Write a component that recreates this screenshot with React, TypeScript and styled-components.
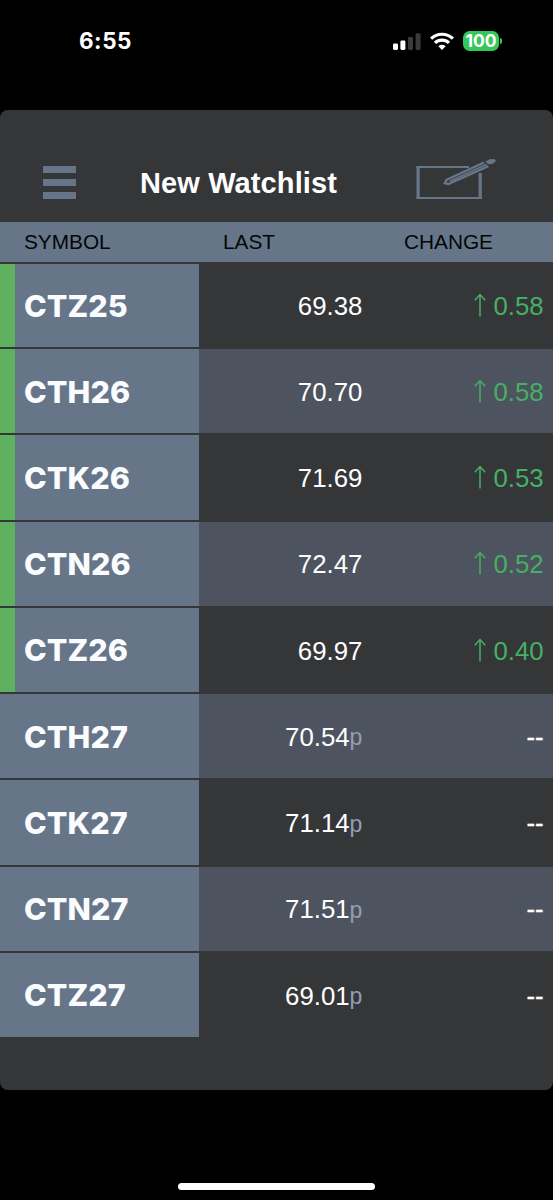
import React from 'react';
import styled, { createGlobalStyle } from 'styled-components';

const steel = '#667688';
const charcoal = '#353638';

const GlobalStyle = createGlobalStyle`
  * { box-sizing: border-box; }
  body { margin: 0; background: #000; font-family: "Liberation Sans", Arial, sans-serif; }
`;

const Screen = styled.div`
  width: 553px;
  height: 1200px;
  background: #000;
  display: flex;
  flex-direction: column;
  overflow: hidden;
`;

const StatusBar = styled.header`
  height: 110px;
  flex: none;
  display: flex;
  justify-content: space-between;
  align-items: flex-start;
  padding: 27px 51px 0 79px;
`;

const Clock = styled.span`
  font: 700 22.5px/28px Inter, sans-serif;
  letter-spacing: 0.5px;
  color: #fff;
`;

const Indicators = styled.div`
  display: flex;
  align-items: center;
  height: 28px;
`;

const SignalIcon = styled.svg`
  display: block;
  margin-right: 9px;
`;

const WifiIcon = styled.svg`
  display: block;
  margin-right: 9px;
`;

const Battery = styled.div`
  width: 36px;
  height: 20px;
  border-radius: 6.5px;
  background: #34c759;
  color: #fff;
  text-align: center;
  font: 700 17.5px/20px Inter, sans-serif;
  letter-spacing: -0.1px;
`;

const BatteryTip = styled.div`
  width: 2px;
  height: 6px;
  margin-left: 1px;
  border-radius: 0 2px 2px 0;
  background: #34c759;
`;

const Panel = styled.main`
  height: 980px;
  flex: none;
  border-radius: 8px;
  background: ${charcoal};
  overflow: hidden;
`;

const Toolbar = styled.div`
  height: 112px;
  display: flex;
  align-items: flex-start;
  padding: 48px 56px 0 43px;
`;

const MenuButton = styled.button`
  width: 33px;
  height: 33px;
  margin: 8px 64px 0 0;
  padding: 0;
  border: 0;
  background: none;
  display: flex;
  flex-direction: column;
  justify-content: space-between;
`;

const MenuBar = styled.span`
  width: 33px;
  height: 7px;
  background: ${steel};
`;

const Title = styled.h1`
  margin: 8px auto 0 0;
  font-size: 29px;
  line-height: 34px;
  font-weight: 700;
  letter-spacing: 0.12px;
  color: #fff;
  white-space: nowrap;
`;

const EditButton = styled.button`
  padding: 0;
  border: 0;
  background: none;
  svg { display: block; }
`;

const ColumnHeader = styled.div`
  height: 40px;
  display: grid;
  grid-template-columns: 223px 181px 1fr;
  background: ${steel};
  color: #020609;
  font-size: 20.8px;
  line-height: 40px;
`;

const HeaderLabel = styled.span<{ $inset?: boolean }>`
  padding-left: ${p => (p.$inset ? '24px' : '0')};
`;

const Rows = styled.div`
  padding-top: 2px;
  display: flex;
  flex-direction: column;
  gap: 2px;
`;

const Row = styled.div<{ $shaded: boolean; $first: boolean }>`
  height: ${p => (p.$first ? 83 : 84.28)}px;
  flex: none;
  display: grid;
  grid-template-columns: 198.6px 163.8px 1fr;
  grid-template-rows: 100%;
  background: ${p => (p.$shaded ? '#4d545f' : charcoal)};
  line-height: 30px;
  color: #fff;
`;

const Cell = styled.div`
  display: flex;
  align-items: center;
`;

const SymbolCell = styled(Cell)<{ $up: boolean }>`
  border-left: 15px solid ${p => (p.$up ? '#60b15f' : steel)};
  padding: 1px 0 0 9px;
  background: ${steel};
  font-family: Inter, sans-serif;
  font-size: 30.5px;
  font-weight: 800;
  letter-spacing: 0.1px;
  color: #fafcff;
`;

const LastCell = styled(Cell)`
  justify-content: flex-end;
  font-size: 25.8px;
  padding-top: 1.4px;
`;

const Previous = styled.span`
  color: #929db6;
  font-size: 23px;
  padding-top: 1px;
`;

const ChangeCell = styled(Cell)<{ $up: boolean }>`
  justify-content: flex-end;
  padding: 1.4px 9.4px 0 0;
  font-size: 25.8px;
  color: ${p => (p.$up ? '#45b064' : '#fff')};
`;

const NoChange = styled.span`
  -webkit-text-stroke: 0.3px #fff;
`;

const Arrow = styled.svg`
  margin: -2px 7px 0 0;
`;

const HomeArea = styled.footer`
  flex: 1;
  display: flex;
  justify-content: center;
  align-items: flex-end;
  padding-bottom: 10px;
`;

const HomeIndicator = styled.div`
  width: 197px;
  height: 7px;
  border-radius: 4px;
  background: #fff;
`;

const quotes = [
  { symbol: 'CTZ25', last: '69.38', change: '0.58' },
  { symbol: 'CTH26', last: '70.70', change: '0.58' },
  { symbol: 'CTK26', last: '71.69', change: '0.53' },
  { symbol: 'CTN26', last: '72.47', change: '0.52' },
  { symbol: 'CTZ26', last: '69.97', change: '0.40' },
  { symbol: 'CTH27', last: '70.54' },
  { symbol: 'CTK27', last: '71.14' },
  { symbol: 'CTN27', last: '71.51' },
  { symbol: 'CTZ27', last: '69.01' },
];

export default function App() {
  return (
    <Screen>
      <GlobalStyle />
      <StatusBar>
        <Clock>6:55</Clock>
        <Indicators>
          <SignalIcon width="28" height="18" viewBox="0 0 28 18">
            <rect x="0" y="11.5" width="5" height="6.5" rx="1.4" fill="#fff" />
            <rect x="7.4" y="8.5" width="5" height="9.5" rx="1.4" fill="#fff" />
            <rect x="15" y="5" width="5" height="13" rx="1.4" fill="#3a3a3c" />
            <rect x="22.6" y="1.2" width="5" height="16.8" rx="1.4" fill="#3a3a3c" />
          </SignalIcon>
          <WifiIcon width="24" height="18" viewBox="0 0 24 18" fill="none" stroke="#fff" strokeWidth="3.2">
            <path d="M1.1 6.7a15.6 15.6 0 0 1 21.8 0" />
            <path d="M5 10.9a10 10 0 0 1 14 0" />
            <path d="M8.4 14.2a5.2 5.2 0 0 1 7.2 0L12 17.9z" fill="#fff" stroke="none" />
          </WifiIcon>
          <Battery>100</Battery>
          <BatteryTip />
        </Indicators>
      </StatusBar>
      <Panel>
        <Toolbar>
          <MenuButton aria-label="Menu">
            <MenuBar />
            <MenuBar />
            <MenuBar />
          </MenuButton>
          <Title>New Watchlist</Title>
          <EditButton aria-label="Edit">
            <svg width="81" height="42" viewBox="0 0 81 42" fill="none" stroke={steel}>
              <path d="M53 9H0.5" strokeWidth="2" />
              <path d="M2.1 8V41M64.2 15V41" strokeWidth="3.2" />
              <path d="M0.5 40H65.8" strokeWidth="2" />
              <path d="M68 4.5L30.5 21.8L28.8 25.2L32.4 26L72.3 8.2" strokeWidth="2.4" />
              <path d="M34 23.2L70.5 6.2" strokeWidth="1.5" />
              <path d="M69.4 3.4L73.8 1.2L78.4 1L80 3L76.5 6L72.4 6.2Z" fill={steel} stroke="none" />
            </svg>
          </EditButton>
        </Toolbar>
        <ColumnHeader>
          <HeaderLabel $inset>SYMBOL</HeaderLabel>
          <HeaderLabel>LAST</HeaderLabel>
          <HeaderLabel>CHANGE</HeaderLabel>
        </ColumnHeader>
        <Rows>
          {quotes.map((q, i) => (
            <Row key={q.symbol} $shaded={i % 2 === 1} $first={i === 0}>
              <SymbolCell $up={!!q.change}>{q.symbol}</SymbolCell>
              <LastCell>
                {q.last}
                {!q.change && <Previous>p</Previous>}
              </LastCell>
              <ChangeCell $up={!!q.change}>
                {q.change ? (
                  <>
                    <Arrow width="12" height="24" viewBox="0 0 12 24" fill="none" stroke="currentColor" strokeWidth="1.5">
                      <path d="M6 23.5V1.5M0.8 7.2L6 1.5L11.2 7.2" />
                    </Arrow>
                    {q.change}
                  </>
                ) : (
                  <NoChange>--</NoChange>
                )}
              </ChangeCell>
            </Row>
          ))}
        </Rows>
      </Panel>
      <HomeArea>
        <HomeIndicator />
      </HomeArea>
    </Screen>
  );
}
